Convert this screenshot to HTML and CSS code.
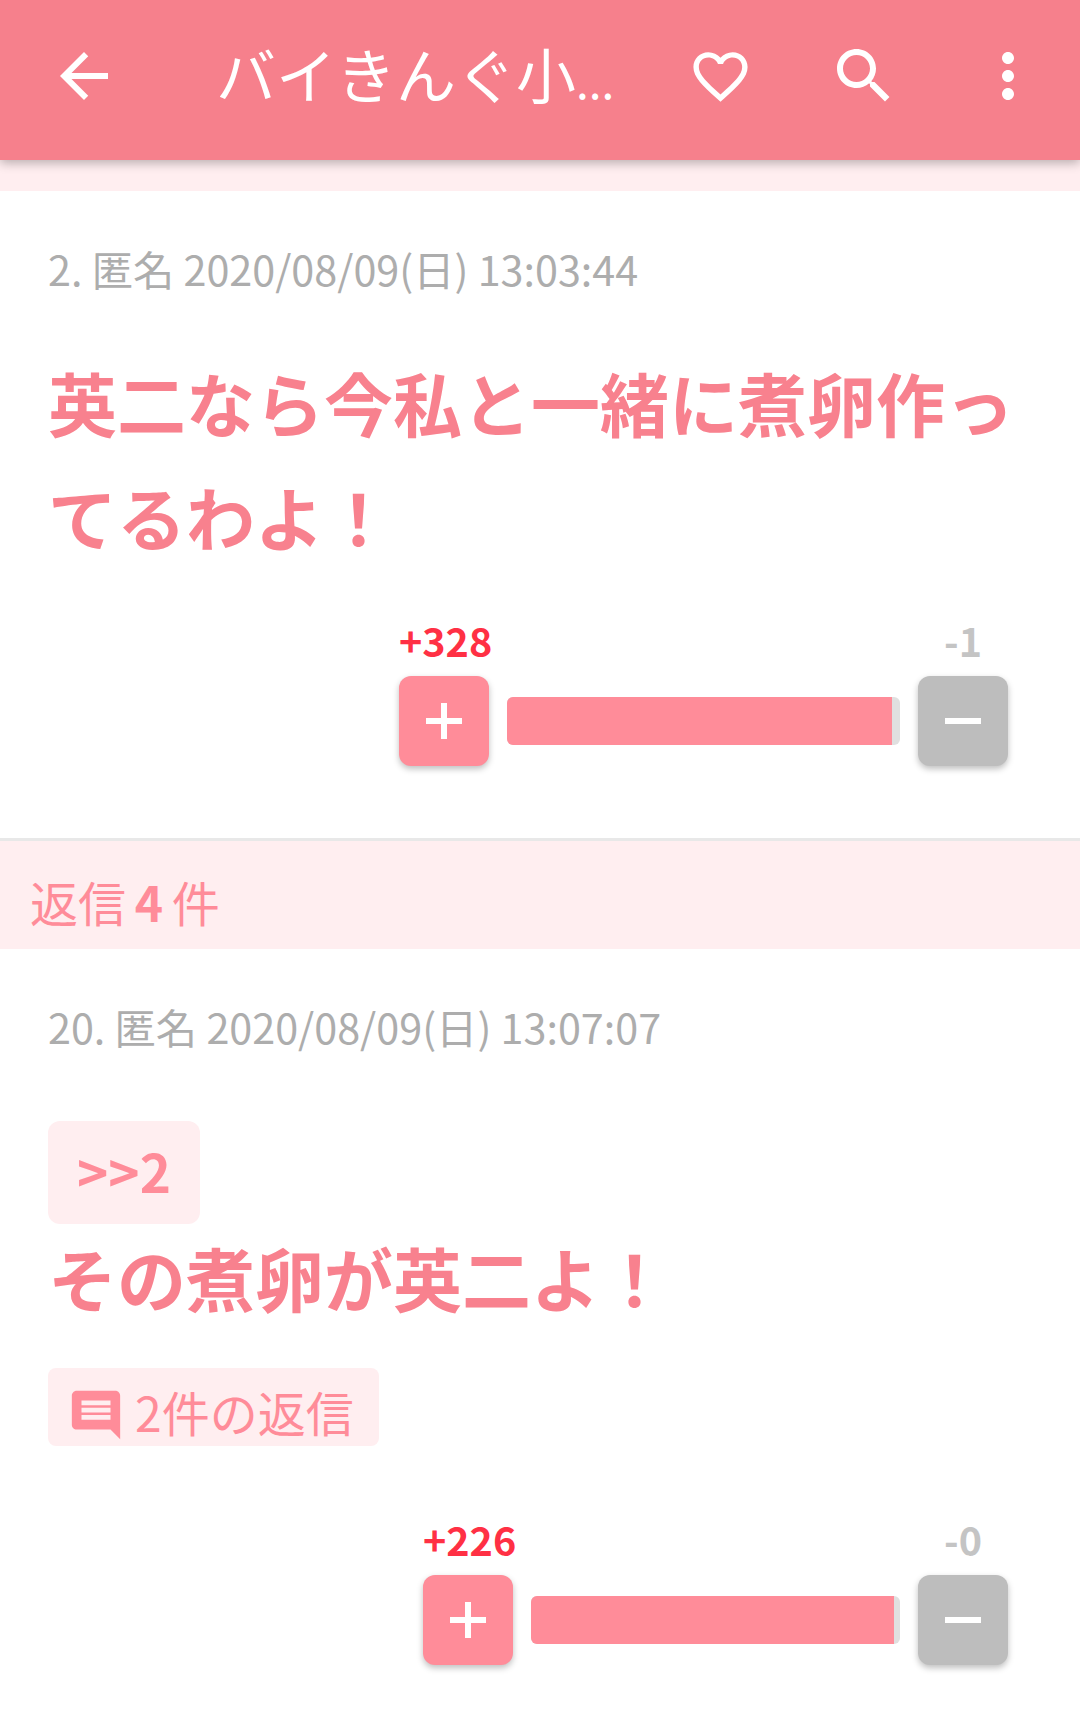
FILE: index.html
```html
<!DOCTYPE html>
<html lang="ja">
<head>
<meta charset="utf-8">
<title>バイきんぐ小峠</title>
<link rel="stylesheet" href="styles.css">
</head>
<body>
<header class="appbar">
  <button class="icon-btn back" aria-label="戻る">
    <svg class="icon" viewBox="0 0 24 24"><path d="M20 11H7.83l5.59-5.59L12 4l-8 8 8 8 1.41-1.41L7.83 13H20v-2z"/></svg>
  </button>
  <h1 class="appbar-title">バイきんぐ小<span class="dots">...</span></h1>
  <button class="icon-btn" aria-label="お気に入り">
    <svg class="icon heart" viewBox="0 0 24 24"><path d="M16.5 3c-1.74 0-3.41.81-4.5 2.09C10.91 3.81 9.24 3 7.5 3 4.42 3 2 5.42 2 8.5c0 3.78 3.4 6.86 8.55 11.54L12 21.35l1.45-1.32C18.6 15.36 22 12.28 22 8.5 22 5.42 19.58 3 16.5 3zm-4.4 15.55l-.1.1-.1-.1C7.14 14.24 4 11.39 4 8.5 4 6.5 5.5 5 7.5 5c1.54 0 3.04.99 3.57 2.36h1.87C13.46 5.99 14.96 5 16.5 5c2 0 3.5 1.5 3.5 3.5 0 2.89-3.14 5.74-7.9 10.05z"/></svg>
  </button>
  <button class="icon-btn" aria-label="検索">
    <svg class="icon" viewBox="0 0 24 24"><path d="M15.5 14h-.79l-.28-.27C15.41 12.59 16 11.11 16 9.5 16 5.91 13.09 3 9.5 3S3 5.91 3 9.5 5.91 16 9.5 16c1.61 0 3.09-.59 4.23-1.57l.27.28v.79l5 4.99L20.49 19l-4.99-5zm-6 0C7.01 14 5 11.99 5 9.5S7.01 5 9.5 5 14 7.01 14 9.5 11.99 14 9.5 14z"/></svg>
  </button>
  <button class="icon-btn" aria-label="メニュー">
    <svg class="icon" viewBox="0 0 24 24"><path d="M12 8c1.1 0 2-.9 2-2s-.9-2-2-2-2 .9-2 2 .9 2 2 2zm0 2c-1.1 0-2 .9-2 2s.9 2 2 2 2-.9 2-2-.9-2-2-2zm0 6c-1.1 0-2 .9-2 2s.9 2 2 2 2-.9 2-2-.9-2-2-2z"/></svg>
  </button>
</header>

<div class="strip"></div>

<main>
  <article class="post post-main">
    <p class="meta">2. 匿名 2020/08/09(日) 13:03:44</p>
    <p class="body">英二なら今私と一緒に煮卵作ってるわよ！</p>
    <div class="vote">
      <span class="count plus">+328</span>
      <span></span>
      <span class="count minus">-1</span>
      <button class="vote-btn plus-btn" aria-label="プラス">
        <svg class="sign" viewBox="0 0 36 36"><rect x="15" width="6" height="36"/><rect y="15" width="36" height="6"/></svg>
      </button>
      <div class="bar" style="width:393px"><div class="bar-fill" style="width:98%"></div></div>
      <button class="vote-btn minus-btn" aria-label="マイナス">
        <svg class="sign" viewBox="0 0 36 36"><rect y="15" width="36" height="6"/></svg>
      </button>
    </div>
  </article>

  <h2 class="replies">返信 <b class="replies-num">4</b> 件</h2>

  <article class="post post-reply">
    <p class="meta">20. 匿名 2020/08/09(日) 13:07:07</p>
    <a class="anchor">&gt;&gt;2</a>
    <p class="body">その煮卵が英二よ！</p>
    <a class="reply-link">
      <svg class="reply-icon" viewBox="0 0 24 24"><path d="M21.99 4c0-1.1-.89-2-1.99-2H4c-1.1 0-2 .9-2 2v12c0 1.1.9 2 2 2h14l4 4-.01-18zM18 14H6v-2h12v2zm0-3H6V9h12v2zm0-3H6V6h12v2z"/></svg>
      <span class="reply-text">2件の返信</span>
    </a>
    <div class="vote">
      <span class="count plus">+226</span>
      <span></span>
      <span class="count minus">-0</span>
      <button class="vote-btn plus-btn" aria-label="プラス">
        <svg class="sign" viewBox="0 0 36 36"><rect x="15" width="6" height="36"/><rect y="15" width="36" height="6"/></svg>
      </button>
      <div class="bar" style="width:369px"><div class="bar-fill" style="width:98.4%"></div></div>
      <button class="vote-btn minus-btn" aria-label="マイナス">
        <svg class="sign" viewBox="0 0 36 36"><rect y="15" width="36" height="6"/></svg>
      </button>
    </div>
  </article>
</main>
</body>
</html>
```

FILE: styles.css
```css
* { box-sizing: border-box; }

html, body {
  margin: 0;
  height: 1720px;
  overflow: hidden;
  background: #fff;
  font-family: "Noto Sans CJK JP", "Noto Sans", sans-serif;
}

p, h1, h2 { margin: 0; font-weight: 400; }

button {
  border: 0;
  padding: 0;
  background: none;
  font: inherit;
}

.appbar {
  position: relative;
  z-index: 1;
  display: flex;
  align-items: center;
  height: 160px;
  padding-bottom: 8px;
  background: #f6808c;
  box-shadow: 0 3px 10px rgba(0, 0, 0, .28);
}

.icon-btn {
  flex: none;
  display: flex;
  align-items: center;
  justify-content: center;
  width: 144px;
  height: 144px;
}

.back { margin: 0 0 0 12px; }

.icon {
  width: 72px;
  height: 72px;
  fill: #fff;
}

.heart { width: 65px; height: 65px; }

.appbar-title {
  flex: 1;
  min-width: 0;
  margin-left: 60px;
  color: #fff;
  font-size: 60px;
  line-height: 72px;
  white-space: nowrap;
}

.dots { font-size: 46px; }

.strip {
  height: 31px;
  background: #ffeef0;
}

.post { padding: 47px 48px 72px 48px; }

.meta {
  color: #adadad;
  font-size: 41.3px;
  line-height: 60px;
}

.body {
  color: #f8818e;
  font-size: 69px;
  font-weight: 700;
  line-height: 114px;
}

.post-main .body {
  margin-top: 47px;
  margin-bottom: 47px;
}

.post-reply .body { margin-top: -4px; }

.anchor {
  display: block;
  width: 152px;
  height: 103px;
  margin-top: 65px;
  border-radius: 12px;
  background: #ffeef0;
  color: #ff8c99;
  font-size: 53px;
  font-weight: 700;
  line-height: 98px;
  text-align: center;
}

.reply-link {
  display: flex;
  align-items: center;
  gap: 10px;
  width: 331px;
  height: 78px;
  margin-top: 34px;
  margin-bottom: 73px;
  padding: 16px 0 0 19px;
  border-radius: 8px;
  background: #ffeef0;
  color: #ff8c99;
  font-size: 48px;
  line-height: 62px;
}

.reply-text { margin-bottom: 9px; }

.reply-icon {
  flex: none;
  width: 58px;
  height: 58px;
  fill: #ff8c99;
}

.vote {
  display: grid;
  grid-template-columns: 90px auto 90px;
  grid-template-rows: 44px 90px;
  gap: 12px 18px;
  justify-content: end;
  align-items: start;
  margin-right: 24px;
}

.count {
  font-size: 39.5px;
  font-weight: 700;
  line-height: 40px;
  text-align: center;
}

.plus { color: #ff3044; }
.minus { color: #c4c4c4; }

.vote-btn {
  display: flex;
  align-items: center;
  justify-content: center;
  width: 90px;
  height: 90px;
  border-radius: 12px;
  box-shadow: 0 3px 6px rgba(0, 0, 0, .25);
}

.plus-btn { background: #ff8c99; }
.minus-btn { background: #bdbdbd; }

.sign {
  width: 36px;
  height: 36px;
  fill: #fff;
}

.bar {
  height: 48px;
  align-self: center;
  overflow: hidden;
  border-radius: 6px;
  background: #e0e0e0;
}

.bar-fill {
  height: 100%;
  background: #ff8c99;
}

.replies {
  height: 111px;
  padding: 12px 0 0 30px;
  border-top: 3px solid #e8e8e8;
  background: #ffeef0;
  color: #ff8c99;
  font-size: 48px;
  line-height: 96px;
  word-spacing: -2px;
}

.replies-num { font-weight: 700; }
```
